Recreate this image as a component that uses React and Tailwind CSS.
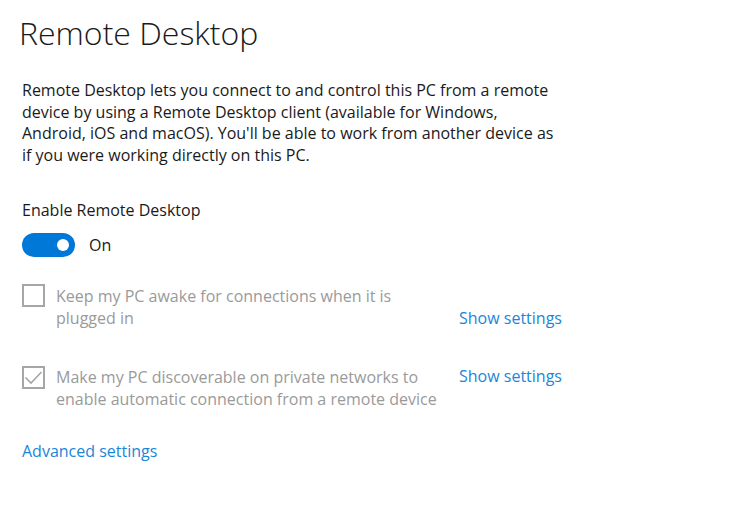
export default function App() {
  const font = { fontFamily: '"Open Sans", "Noto Sans", sans-serif' };
  return (
    <div className="w-[743px] h-[506px] bg-white text-black" style={font}>
      <div className="pl-[22px] pt-[13px]">
        <h1 className="text-[32px] leading-[40px] font-light text-[#1a1a1a] -ml-[3px]">Remote Desktop</h1>
        <p className="mt-[27px] w-[600px] text-[16px] leading-[21.5px] text-[#1a1a1a]">
          Remote Desktop lets you connect to and control this PC from a remote<br />
          device by using a Remote Desktop client (available for Windows,<br />
          Android, iOS and macOS). You'll be able to work from another device as<br />
          if you were working directly on this PC.
        </p>
        <div className="mt-[34px] text-[16px] leading-[20px] text-[#1a1a1a]">Enable Remote Desktop</div>
        <div className="mt-[13px] flex items-center gap-[14px]">
          <div className="w-[53px] h-[24px] rounded-full bg-[#0078d7] flex items-center justify-end pr-[6px]">
            <div className="w-[12px] h-[12px] rounded-full bg-white" />
          </div>
          <span className="text-[16px] text-[#1a1a1a]">On</span>
        </div>
        <div className="mt-[27px] flex items-start">
          <div className="w-[23px] h-[23px] border-2 border-[#a6a6a6] shrink-0" />
          <div className="ml-[11px] w-[380px] shrink-0 whitespace-nowrap mt-[1px] text-[16px] leading-[22px] text-[#9a9a9a]">
            Keep my PC awake for connections when it is<br />plugged in
          </div>
          <a className="ml-[23px] mt-[23px] text-[16px] leading-[22px] text-[#1a86d9]">Show settings</a>
        </div>
        <div className="mt-[37px] flex items-start">
          <div className="w-[23px] h-[23px] border-2 border-[#a6a6a6] shrink-0 flex items-center justify-center">
            <svg width="19" height="19" viewBox="0 0 19 19">
              <path d="M1.5 9.5 L7 15 L17.5 4" fill="none" stroke="#a6a6a6" strokeWidth="1.6" />
            </svg>
          </div>
          <div className="ml-[11px] w-[380px] shrink-0 whitespace-nowrap text-[16px] leading-[22px] text-[#9a9a9a]">
            Make my PC discoverable on private networks to<br />enable automatic connection from a remote device
          </div>
          <a className="ml-[23px] -mt-[1px] text-[16px] leading-[22px] text-[#1a86d9]">Show settings</a>
        </div>
        <a className="block mt-[30px] text-[16px] leading-[22px] text-[#1a86d9]">Advanced settings</a>
      </div>
    </div>
  );
}
